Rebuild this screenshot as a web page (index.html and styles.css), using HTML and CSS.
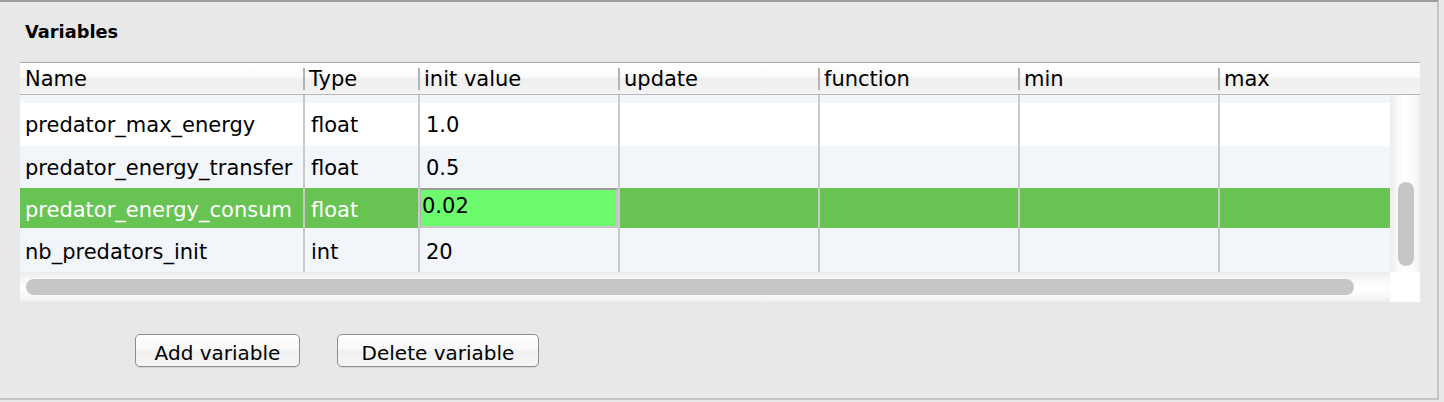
FILE: index.html
```html
<!DOCTYPE html>
<html>
<head>
<meta charset="utf-8">
<link rel="stylesheet" href="styles.css">
</head>
<body>
<div class="panel">
  <h2 class="title">Variables</h2>
  <div class="grid-table">
    <div class="thead">
      <div class="th first">Name</div>
      <div class="th">Type</div>
      <div class="th">init value</div>
      <div class="th">update</div>
      <div class="th">function</div>
      <div class="th">min</div>
      <div class="th">max</div>
    </div>
    <div class="body-wrap">
      <div class="tbody">
        <div class="row alt partial">
          <div class="td first"></div><div class="td"></div><div class="td"></div><div class="td"></div><div class="td"></div><div class="td"></div><div class="td"></div>
        </div>
        <div class="row r1">
          <div class="td first">predator_max_energy</div><div class="td">float</div><div class="td">1.0</div><div class="td"></div><div class="td"></div><div class="td"></div><div class="td"></div>
        </div>
        <div class="row alt r2">
          <div class="td first">predator_energy_transfer</div><div class="td">float</div><div class="td">0.5</div><div class="td"></div><div class="td"></div><div class="td"></div><div class="td"></div>
        </div>
        <div class="row selected r3">
          <div class="td first">predator_energy_consum</div><div class="td">float</div><div class="td editing"><span class="editor">0.02</span></div><div class="td"></div><div class="td"></div><div class="td"></div><div class="td"></div>
        </div>
        <div class="row alt r4">
          <div class="td first">nb_predators_init</div><div class="td">int</div><div class="td">20</div><div class="td"></div><div class="td"></div><div class="td"></div><div class="td"></div>
        </div>
      </div>
      <div class="vscroll"><div class="vthumb"></div></div>
    </div>
    <div class="hscroll-row">
      <div class="hscroll"><div class="hthumb"></div></div>
      <div class="corner"></div>
    </div>
  </div>
  <div class="actions">
    <button class="btn btn-add">Add variable</button>
    <button class="btn btn-del">Delete variable</button>
  </div>
</div>
</body>
</html>
```
FILE: styles.css
```css
html, body {
  margin: 0;
  padding: 0;
  background: #e8e8e8;
}
body {
  font-family: "DejaVu Sans", "Noto Sans", sans-serif;
  color: #000;
}
.panel {
  box-sizing: border-box;
  width: 1439px;
  height: 400px;
  background: #e8e8e8;
  border-top: 2px solid #9c9c9c;
  border-right: 2px solid #c4c4c4;
  border-bottom: 2px solid #c4c4c4;
  padding: 20px 0 0 20px;
}
.title {
  margin: 0;
  padding-left: 5px;
  font-size: 17.8px;
  line-height: 20px;
  font-weight: bold;
}
.grid-table {
  margin-top: 20px;
  width: 1400px;
}
.thead {
  display: grid;
  grid-template-columns: 283px 115px 200px 200px 200px 200px 202px;
  height: 31px;
  border-top: 1px solid #a8a8a8;
  border-bottom: 1px solid #b8b8b8;
  background: linear-gradient(#ffffff 0%, #fafafa 45%, #efefef 52%, #f3f3f3 100%);
}
.th {
  font-size: 21px;
  line-height: 24px;
  padding: 4px 0 0 6px;
  white-space: nowrap;
  overflow: hidden;
  background: linear-gradient(#b4b4b4, #b4b4b4) no-repeat 0 5px / 2px 22px;
}
.th.first {
  padding-left: 5px;
  background: none;
}
.body-wrap {
  display: flex;
  height: 177px;
}
.tbody {
  width: 1370px;
  overflow: hidden;
  background: #fff;
}
.row {
  display: grid;
  grid-template-columns: 283px 115px 200px 200px 200px 200px 200px;
  background: #fff;
}
.row.alt { background: #f2f5fa; }
.row.partial { height: 8px; }
.r1 { height: 43px; }
.r2 { height: 42px; }
.r3 { height: 40px; }
.r4 { height: 44px; }
.row.selected {
  background: #68c452;
  color: #fff;
}
.td {
  font-size: 21px;
  line-height: 24px;
  padding: 10px 0 0 6px;
  border-left: 2px solid #cacaca;
  white-space: nowrap;
  overflow: hidden;
}
.r4 .td { padding-top: 12px; }
.partial .td { padding: 0; }
.td.first {
  border-left: none;
  padding-left: 5px;
}
.partial .td.first { padding: 0; }
.td.editing {
  padding: 0;
  display: flex;
}
.editor {
  flex: 1;
  box-sizing: border-box;
  height: 40px;
  background: #6cfb6c;
  color: #000;
  border-top: 2px solid #9a9a9a;
  border-left: 1px solid #b0b0b0;
  border-right: 2px solid #c4c4c4;
  border-bottom: 2px solid #c4c4c4;
  padding: 4px 0 0 1px;
}
.vscroll {
  width: 30px;
  background: linear-gradient(90deg, #ececec 0%, #f9f9f9 25%, #ffffff 50%, #f9f9f9 80%, #efefef 100%);
}
.vthumb {
  margin: 87px 0 0 8px;
  width: 16px;
  height: 84px;
  border-radius: 8px;
  background: #c6c6c6;
}
.hscroll-row {
  display: flex;
  height: 30px;
}
.hscroll {
  width: 1370px;
  background: linear-gradient(#ececec 0%, #f7f7f7 25%, #ffffff 55%, #f6f6f6 85%, #eeeeee 100%);
}
.hthumb {
  margin: 7px 0 0 6px;
  width: 1328px;
  height: 16px;
  border-radius: 8px;
  background: #c6c6c6;
}
.corner {
  width: 30px;
  background: #fff;
}
.actions {
  display: flex;
  gap: 37px;
  margin-top: 32px;
  padding-left: 115px;
}
.btn {
  box-sizing: border-box;
  height: 33px;
  font-family: "DejaVu Sans", "Noto Sans", sans-serif;
  font-size: 20px;
  line-height: 24px;
  color: #000;
  padding: 4px 0 0;
  border: 1px solid #8e8e8e;
  border-radius: 5px;
  background: linear-gradient(#ffffff 0%, #f9f9f9 45%, #efefef 55%, #f6f6f6 100%);
  box-shadow: 0 1px 0 rgba(0,0,0,0.08);
}
.btn-add { width: 165px; }
.btn-del { width: 202px; }
```
